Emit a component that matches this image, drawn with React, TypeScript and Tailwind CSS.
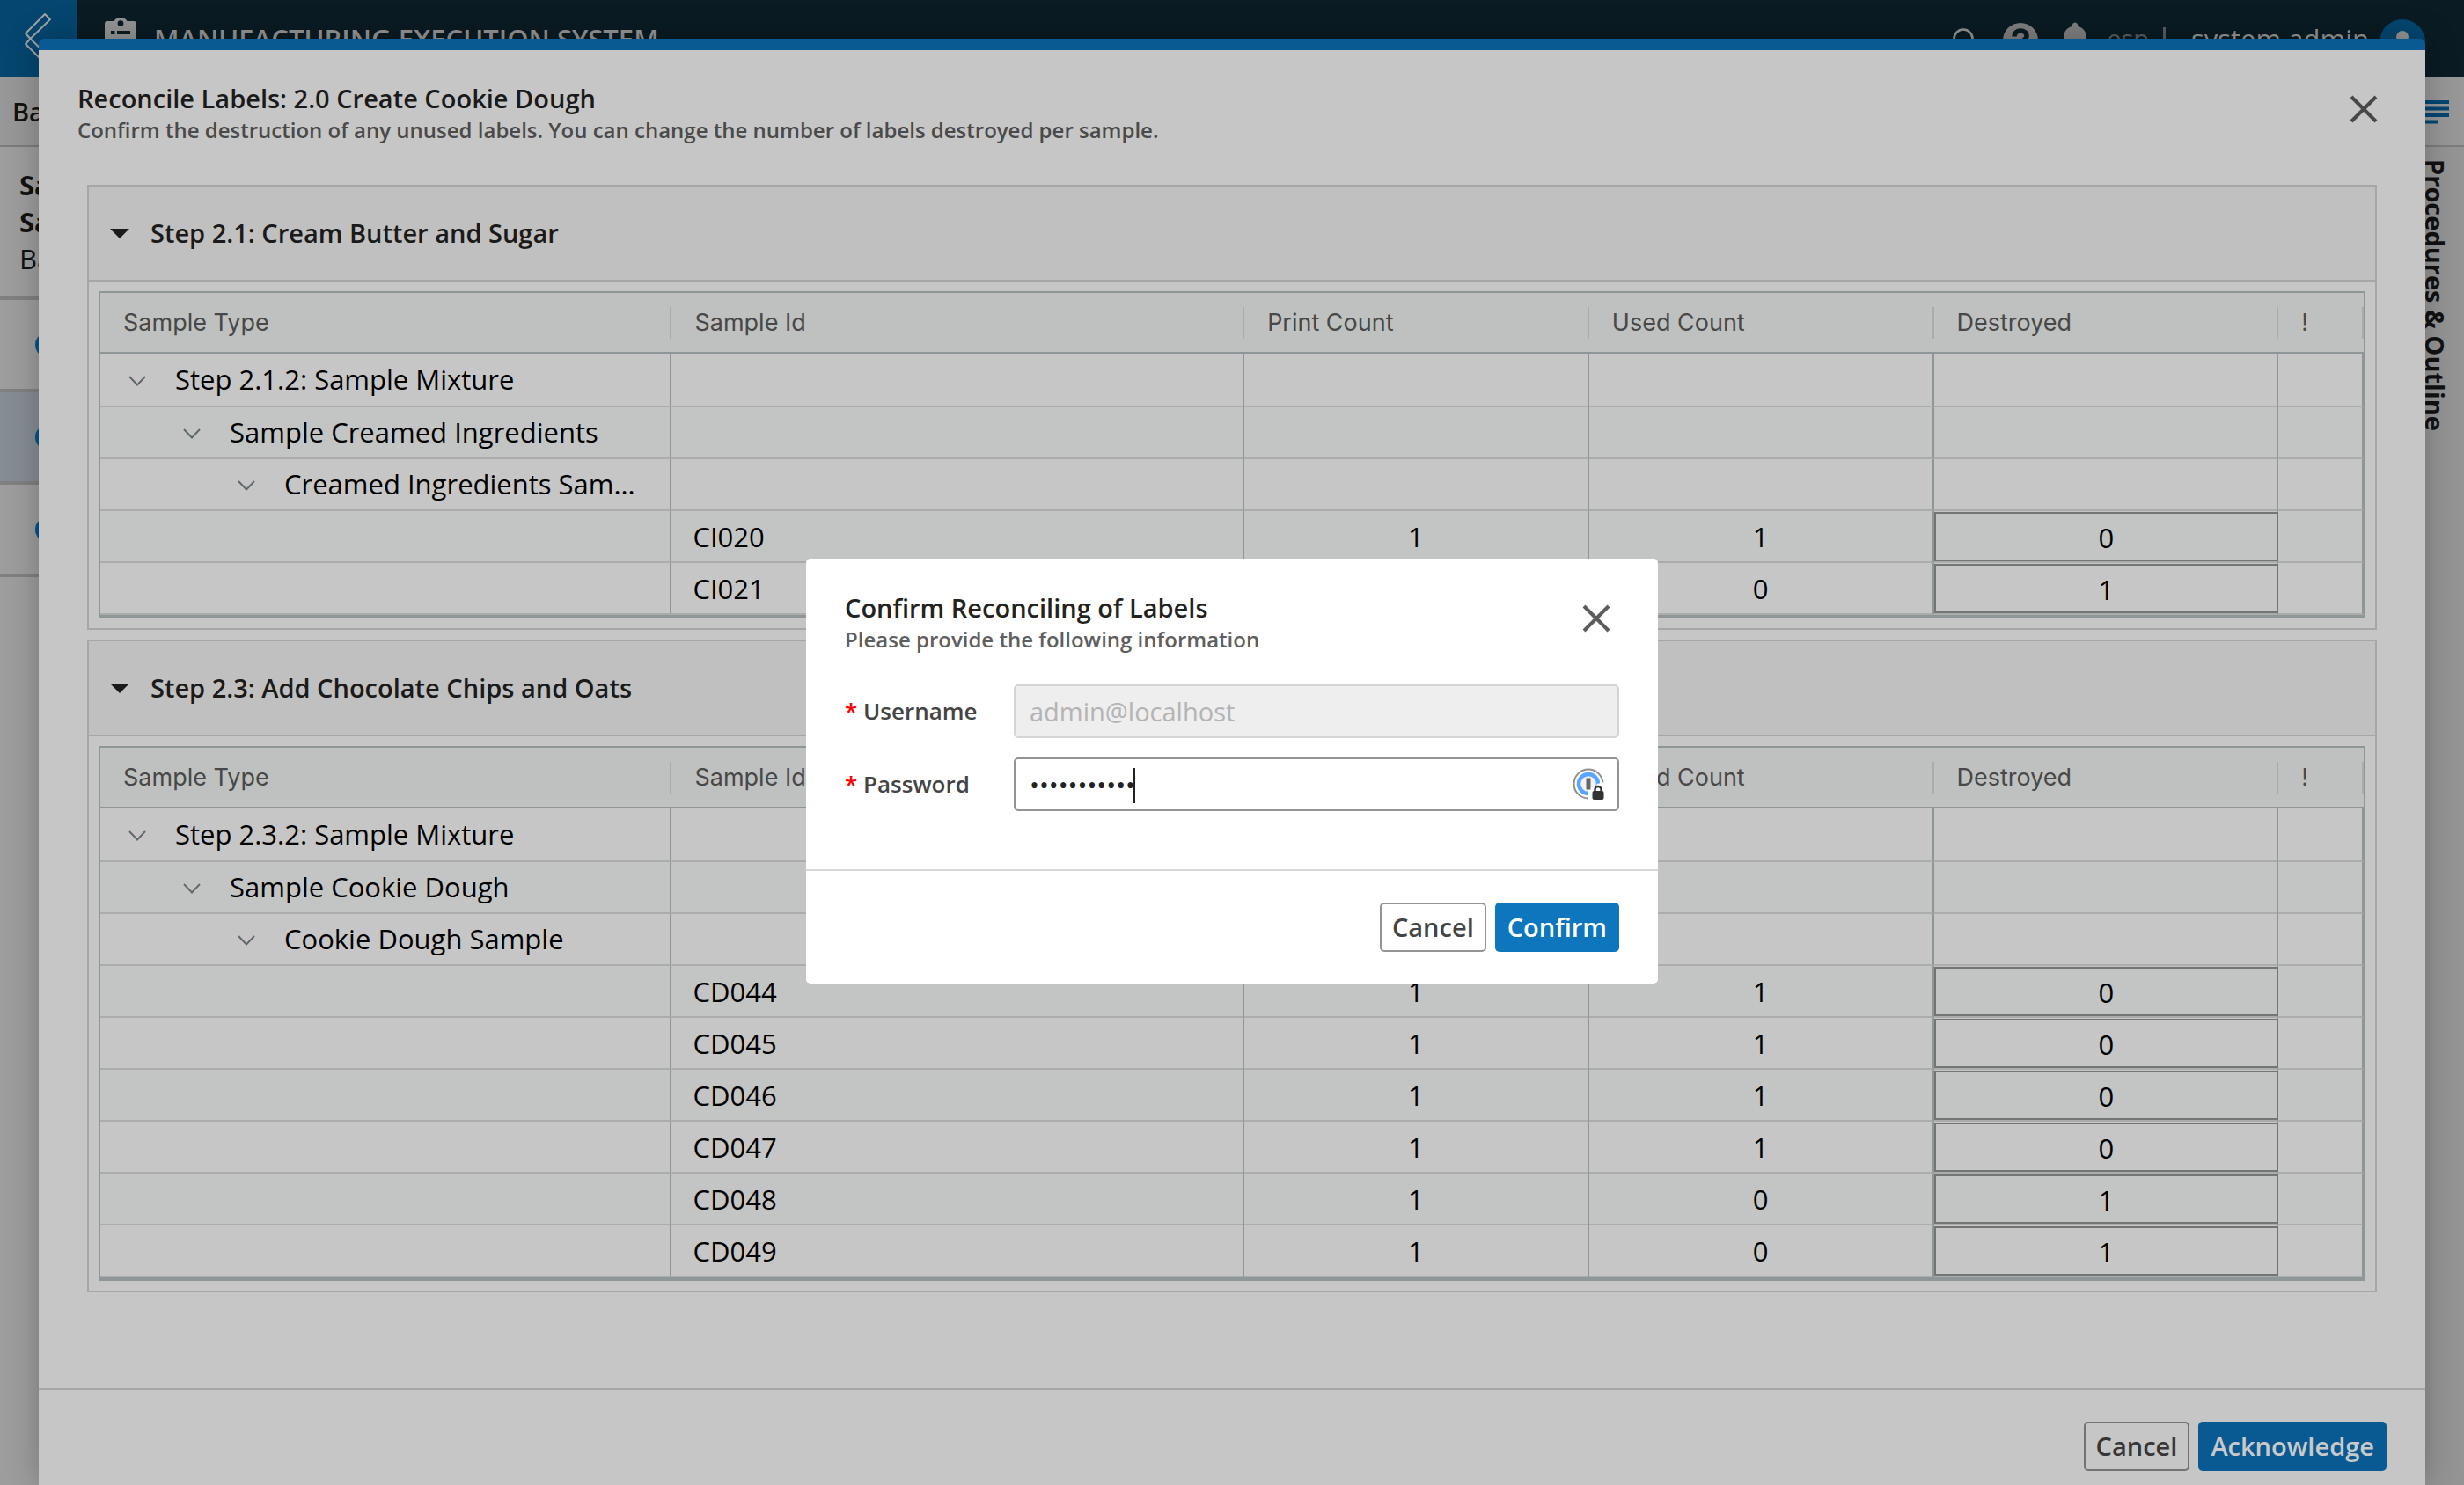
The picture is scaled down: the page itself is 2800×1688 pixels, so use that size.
import React, { useState } from "react";

type Row = {
  label?: string;
  level?: number;
  id?: string;
  printed?: number;
  used?: number;
  destroyed?: number;
};

type Section = { title: string; rows: Row[] };

const sections: Section[] = [
  {
    title: "Step 2.1: Cream Butter and Sugar",
    rows: [
      { label: "Step 2.1.2: Sample Mixture", level: 0 },
      { label: "Sample Creamed Ingredients", level: 1 },
      { label: "Creamed Ingredients Sample", level: 2 },
      { id: "CI020", printed: 1, used: 1, destroyed: 0 },
      { id: "CI021", printed: 1, used: 0, destroyed: 1 },
    ],
  },
  {
    title: "Step 2.3: Add Chocolate Chips and Oats",
    rows: [
      { label: "Step 2.3.2: Sample Mixture", level: 0 },
      { label: "Sample Cookie Dough", level: 1 },
      { label: "Cookie Dough Sample", level: 2 },
      { id: "CD044", printed: 1, used: 1, destroyed: 0 },
      { id: "CD045", printed: 1, used: 1, destroyed: 0 },
      { id: "CD046", printed: 1, used: 1, destroyed: 0 },
      { id: "CD047", printed: 1, used: 1, destroyed: 0 },
      { id: "CD048", printed: 1, used: 0, destroyed: 1 },
      { id: "CD049", printed: 1, used: 0, destroyed: 1 },
    ],
  },
];

const columns = ["Sample Type", "Sample Id", "Print Count", "Used Count", "Destroyed", "!"];
const indents = ["pl-8", "pl-[94px]", "pl-[156px]"];

function CloseIcon() {
  return (
    <svg width="32" height="32" viewBox="0 0 32 32" fill="none" stroke="currentColor" strokeWidth="4">
      <path d="M2 2L30 30M30 2L2 30" />
    </svg>
  );
}

function BackLogo() {
  return (
    <svg width="88" height="88" viewBox="0 0 88 88" fill="none" stroke="#a3a3a3" strokeWidth="2" strokeLinejoin="round">
      <path d="M51 16L57 22L34.500 44L29 38Z" />
      <path d="M34.500 44L57 66L51 72L29 50Z" />
    </svg>
  );
}

function ClipboardIcon() {
  return (
    <svg width="36" height="48" viewBox="0 0 36 48">
      <path
        fill="#949494"
        fillRule="evenodd"
        d="M3 4H10.500C12 1.500 14.500 0 18 0S24 1.500 25.500 4H33A3 3 0 0 1 36 7V45A3 3 0 0 1 33 48H3A3 3 0 0 1 0 45V7A3 3 0 0 1 3 4ZM18 3.200A3.400 3.400 0 1 0 18 10A3.400 3.400 0 1 0 18 3.200ZM7 15V19H11.500V15ZM14 15V19H29V15ZM7 25V29H11.500V25ZM14 25V29H29V25Z"
      />
    </svg>
  );
}

function PasswordManagerIcon() {
  return (
    <svg width="36" height="36" viewBox="0 0 36 36" fill="none">
      <circle cx="18" cy="18" r="16.500" fill="#fff" stroke="#8f8f8f" strokeWidth="2" />
      <circle cx="18" cy="18" r="13" fill="#f2f2f2" />
      <circle cx="18" cy="18" r="11" stroke="#58a6ff" strokeWidth="4.500" />
      <path d="M18 22H26L28 18L36 16V36H18Z" fill="#fff" />
      <rect x="15.500" y="11.500" width="5" height="13" fill="#666" />
      <path d="M25.500 27V24.500A3.500 3.500 0 0 1 32.500 24.500V27" stroke="#333" strokeWidth="2.400" />
      <rect x="22.500" y="26" width="13" height="10" rx="2" fill="#333" />
    </svg>
  );
}

function TopBar() {
  return (
    <header className="flex h-[88px] items-center bg-[#0a1b23] text-[31px] text-[#949494]">
      <a href="#back" aria-label="Back" className="block h-[88px] w-[88px] bg-[#044670]">
        <BackLogo />
      </a>
      <span className="ml-[31px]">
        <ClipboardIcon />
      </span>
      <h1 className="ml-5 font-semibold">MANUFACTURING EXECUTION SYSTEM</h1>
      <div className="mr-11 ml-auto flex items-center">
        <button type="button" aria-label="Search" className="mr-[31px]">
          <svg width="26" height="26" viewBox="0 0 26 26" fill="none" stroke="#949494" strokeWidth="2.600">
            <circle cx="12" cy="13" r="10.500" />
            <path d="M19 20L25 26" />
          </svg>
        </button>
        <button type="button" aria-label="Help" className="mr-7">
          <svg width="40" height="40" viewBox="0 0 40 40" fill="none">
            <circle cx="20" cy="22" r="20" fill="#7f7f7f" />
            <path d="M13 17.500C13 8.500 27 9 27 17C27 21.500 20 21.500 20 28" stroke="#0a1b23" strokeWidth="5.500" />
          </svg>
        </button>
        <button type="button" aria-label="Notifications" className="mr-[22px]">
          <svg width="28" height="38" viewBox="0 0 28 38" fill="#7f7f7f">
            <path d="M14 0.500A3.300 3.300 0 0 1 17 5C23 6 27 11 27 18V28L28 31H0L1 28V18C1 11 5 6 11 5A3.300 3.300 0 0 1 14 0.500Z" />
          </svg>
        </button>
        <span className="mr-4 text-[29px] text-[#565c60]">esp</span>
        <span className="mr-[29px] h-[26px] w-[3px] bg-[#565c60]" />
        <span>system admin</span>
        <svg className="ml-2.5" width="54" height="54" viewBox="0 0 54 54">
          <circle cx="28" cy="31" r="26" fill="#044670" />
          <circle cx="28" cy="25" r="7" fill="#949494" />
        </svg>
      </div>
    </header>
  );
}

function Background() {
  return (
    <div className="flex h-full flex-col">
      <TopBar />
      <div className="flex h-[79px] items-center justify-between border-b-2 border-[#7c7c7c] bg-[#979797] pr-[17px] pl-3.5">
        <span className="text-[29px] font-semibold text-[#111]">Ba</span>
        <svg width="28" height="28" viewBox="0 0 28 28" fill="#044670">
          <path d="M0 1H28V5H0ZM0 8.500H28V12.500H0ZM0 16H28V20H0ZM0 23.500H16V27.500H0Z" />
        </svg>
      </div>
      <div className="flex flex-1 justify-between bg-[#9d9d9d]">
        <aside className="w-20">
          <div className="h-[174px] border-b-4 border-[#808080] pt-[22px] pl-[22px] text-[31px] leading-[42px] text-[#111]">
            <p className="font-bold">Sa</p>
            <p className="font-bold">Sa</p>
            <p>Ba</p>
          </div>
          {["", "bg-[#858c93]", ""].map((tone, i) => (
            <div key={i} className={`flex h-[105px] items-center border-b-4 border-[#808080] pl-10 ${tone}`}>
              <span className="h-7 w-7 rounded-full bg-[#065285]" />
            </div>
          ))}
        </aside>
        <aside className="w-[52px] bg-[#949494] pt-3.5">
          <span className="block text-[29px] leading-[38px] font-bold text-[#111] [writing-mode:vertical-rl]">
            Procedures &amp; Outline
          </span>
        </aside>
      </div>
    </div>
  );
}

function SampleTable({ section }: { section: Section }) {
  return (
    <table className="w-full table-fixed border-separate border-spacing-0 border-2 border-b-4 border-[#8f9698]">
      <colgroup>
        <col className="w-[25.250%]" />
        <col className="w-[25.300%]" />
        <col className="w-[15.230%]" />
        <col className="w-[15.230%]" />
        <col className="w-[15.230%]" />
        <col />
      </colgroup>
      <thead>
        <tr className="h-[69px] bg-[#bec1c0]">
          {columns.map((name) => (
            <th key={name} scope="col" className="border-b-2 border-[#8f9698] p-0 text-left">
              <div className="flex h-9 items-center border-r-2 border-[#a9abaf] pt-0.5 pl-[26px] font-[Inter] text-[27px] font-normal text-[#484848]">
                {name}
              </div>
            </th>
          ))}
        </tr>
      </thead>
      <tbody className="text-[31px] leading-10 text-black [&_td]:border-r-2 [&_td]:border-b-2 [&_td]:border-r-[#8f9698] [&_td]:border-b-[#abadad] [&_td]:p-0">
        {section.rows.map((row) => (
          <tr key={row.label ?? row.id} className="h-[59px] first:h-[61px] even:bg-[#c3c5c4]">
            <td>
              {row.label && (
                <div className={`flex items-center pr-7 pb-0.5 ${indents[row.level ?? 0]}`}>
                  <button type="button" aria-label={`Collapse ${row.label}`} className="mt-1 mr-[33px] shrink-0">
                    <svg width="20" height="12" viewBox="0 0 20 12" fill="none" stroke="#5f6a6c" strokeWidth="2">
                      <path d="M1 1L10 10.500L19 1" />
                    </svg>
                  </button>
                  <span className="truncate">{row.label}</span>
                </div>
              )}
            </td>
            <td className="pl-6!">{row.id}</td>
            <td className="text-center">{row.printed}</td>
            <td className="text-center">{row.used}</td>
            <td>
              {row.id && (
                <input
                  type="text"
                  inputMode="numeric"
                  aria-label={`Destroyed labels for ${row.id}`}
                  defaultValue={row.destroyed}
                  className="-mr-0.5 block h-[56px] w-[calc(100%+2px)] border-2 border-[#727475] pt-0.5 text-center"
                />
              )}
            </td>
            <td />
          </tr>
        ))}
      </tbody>
    </table>
  );
}

const outlineButton = "h-14 rounded-[5px] border-2 px-3 text-[29px] font-semibold";
const solidButton = "h-14 rounded-[5px] px-3.5 text-[29px] font-semibold";

function ReconcileModal() {
  return (
    <section
      aria-label="Reconcile Labels"
      className="absolute inset-x-11 top-11 bottom-0 flex flex-col rounded-t-md border-t-[13px] border-[#095a92] bg-[#c6c6c6] shadow-[0_0_36px_rgba(0,0,0,0.25)]"
    >
      <div className="flex items-start justify-between pt-[37px] pr-[54px] pl-11">
        <div>
          <h2 className="text-[29px] leading-9 font-semibold text-[#1a1a1a]">Reconcile Labels: 2.0 Create Cookie Dough</h2>
          <p className="text-[24px] leading-9 font-semibold text-[#4a4a4a]">
            Confirm the destruction of any unused labels. You can change the number of labels destroyed per sample.
          </p>
        </div>
        <button type="button" aria-label="Close" className="mt-3.5 text-[#474747]">
          <CloseIcon />
        </button>
      </div>
      <div className="mx-[55px] mt-11 flex flex-1 flex-col gap-[11px]">
        {sections.map((section) => (
          <section key={section.title} className="border-2 border-[#a6a6a6]">
            <h3 className="h-[108px] border-b-2 border-[#a6a6a6] bg-[#c0c0c0]">
              <button
                type="button"
                aria-expanded="true"
                className="flex h-full w-full items-center pl-6 text-[29px] font-semibold text-[#1a1a1a]"
              >
                <svg className="mr-6" width="22" height="12" viewBox="0 0 22 12" fill="currentColor">
                  <path d="M0 1H22L11 12Z" />
                </svg>
                {section.title}
              </button>
            </h3>
            <div className="p-[11px]">
              <SampleTable section={section} />
            </div>
          </section>
        ))}
      </div>
      <footer className="flex justify-end gap-2.5 border-t-2 border-[#a6a6a6] px-11 pt-9 pb-4">
        <button type="button" className={`${outlineButton} border-[#737373] text-[#363636]`}>
          Cancel
        </button>
        <button type="button" className={`${solidButton} bg-[#095a92] text-[#c9c9c9]`}>
          Acknowledge
        </button>
      </footer>
    </section>
  );
}

function ConfirmDialog() {
  const [password, setPassword] = useState("cookiedough");
  return (
    <div className="absolute inset-0 flex items-center justify-center pt-16">
      <form
        role="dialog"
        aria-label="Confirm Reconciling of Labels"
        onSubmit={(e) => e.preventDefault()}
        className="w-[968px] rounded-[5px] bg-white"
      >
        <div className="flex items-start justify-between pt-[38px] pr-[54px] pl-11">
          <div>
            <h2 className="text-[29px] leading-9 font-semibold text-[#222]">Confirm Reconciling of Labels</h2>
            <p className="text-[24px] leading-9 font-semibold text-[#5f5f5f]">Please provide the following information</p>
          </div>
          <button type="button" aria-label="Close" className="mt-3.5 text-[#5c5c5c]">
            <CloseIcon />
          </button>
        </div>
        <div className="grid grid-cols-[192px_1fr] items-center gap-y-[22px] px-11 pt-[33px] pb-[66px]">
          <label htmlFor="username" className="text-[26px] font-semibold text-[#444]">
            <span className="text-[#f00]">*</span> Username
          </label>
          <input
            id="username"
            disabled
            value="admin@localhost"
            className="h-[61px] w-full rounded-[5px] border-2 border-[#d4d4d4] bg-[#eee] px-4 text-[29px] text-[#b4b4b4]"
          />
          <label htmlFor="password" className="text-[26px] font-semibold text-[#444]">
            <span className="text-[#f00]">*</span> Password
          </label>
          <div className="relative">
            <input
              id="password"
              type="password"
              value={password}
              onChange={(e) => setPassword(e.target.value)}
              className="block h-[61px] w-full rounded-[5px] border-2 border-[#949494] bg-white px-4 text-[29px] text-[#222]"
            />
            <span className="absolute top-3 left-[136px] h-10 w-0.5 bg-[#222]" />
            <span className="absolute top-3 right-[17px]">
              <PasswordManagerIcon />
            </span>
          </div>
        </div>
        <div className="flex justify-end gap-2.5 border-t-2 border-[#d8d5d5] px-11 py-9">
          <button type="button" className={`${outlineButton} border-[#949494] text-[#444]`}>
            Cancel
          </button>
          <button type="submit" className={`${solidButton} bg-[#0d76bc] text-white`}>
            Confirm
          </button>
        </div>
      </form>
    </div>
  );
}

export default function App() {
  return (
    <main className="relative h-screen overflow-hidden font-['Open_Sans',sans-serif]">
      <Background />
      <ReconcileModal />
      <ConfirmDialog />
    </main>
  );
}
